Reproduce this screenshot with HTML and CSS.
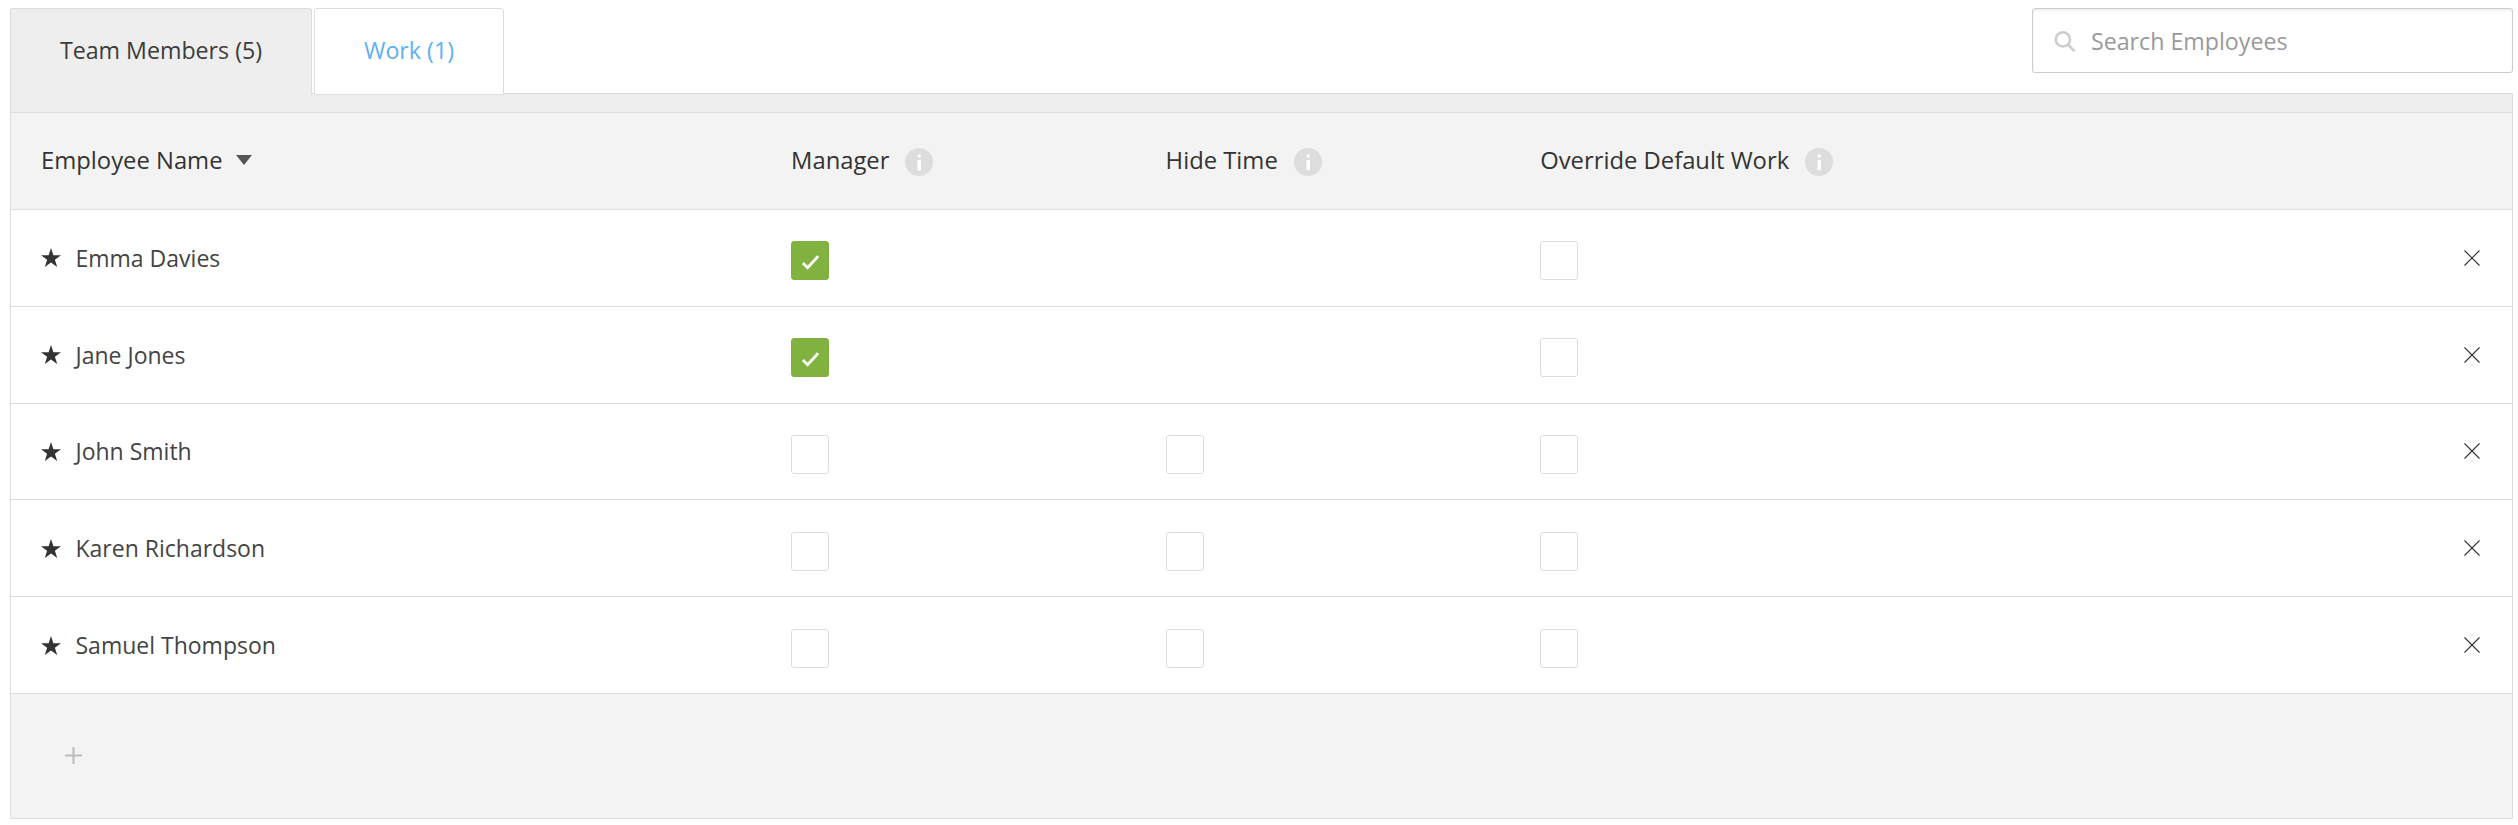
FILE: index.html
```html
<!DOCTYPE html>
<html lang="en">
<head>
<meta charset="utf-8">
<title>Team Members</title>
<link rel="stylesheet" href="styles.css">
</head>
<body>
<div class="top">
  <div class="tabs">
    <div class="tab tab-active">Team Members (5)</div>
    <div class="tab tab-link">Work (1)</div>
  </div>
  <div class="search">
    <svg class="search-icon" viewBox="0 0 21 20"><circle cx="8.5" cy="8" r="6.8"/><path d="M13.5 13l6 6.2"/></svg>
    <span>Search Employees</span>
  </div>
</div>
<div class="panel">
  <div class="band"></div>
  <div class="row head">
    <div class="cell"><span>Employee Name</span><span class="sort"></span></div>
    <div class="cell"><span>Manager</span><svg class="info" viewBox="0 0 27 27"><circle cx="13.5" cy="13.5" r="13.5"/><rect x="12" y="6" width="3.4" height="3.4" rx="1.7"/><rect x="12" y="11.5" width="3.4" height="10"/></svg></div>
    <div class="cell"><span>Hide Time</span><svg class="info" viewBox="0 0 27 27"><circle cx="13.5" cy="13.5" r="13.5"/><rect x="12" y="6" width="3.4" height="3.4" rx="1.7"/><rect x="12" y="11.5" width="3.4" height="10"/></svg></div>
    <div class="cell"><span>Override Default Work</span><svg class="info" viewBox="0 0 27 27"><circle cx="13.5" cy="13.5" r="13.5"/><rect x="12" y="6" width="3.4" height="3.4" rx="1.7"/><rect x="12" y="11.5" width="3.4" height="10"/></svg></div>
    <div class="cell"></div>
  </div>
  <div class="row body">
    <div class="cell"><svg class="star" viewBox="0 0 20 19"><path d="M10 0l2.4 7.2H20l-6.1 4.5 2.3 7.3L10 14.5 3.8 19l2.3-7.3L0 7.2h7.6z"/></svg><span>Emma Davies</span></div>
    <div class="cell box-cell"><span class="check on"><svg viewBox="0 0 20 16"><path d="M2 9l5 5L18 2"/></svg></span></div>
    <div class="cell box-cell"></div>
    <div class="cell box-cell"><span class="check"></span></div>
    <div class="cell close-cell"><svg class="close" viewBox="0 0 16 16"><path d="M.5.5l15 15M15.500.5l-15 15"/></svg></div>
  </div>
  <div class="row body">
    <div class="cell"><svg class="star" viewBox="0 0 20 19"><path d="M10 0l2.4 7.2H20l-6.1 4.5 2.3 7.3L10 14.5 3.8 19l2.3-7.3L0 7.2h7.6z"/></svg><span>Jane Jones</span></div>
    <div class="cell box-cell"><span class="check on"><svg viewBox="0 0 20 16"><path d="M2 9l5 5L18 2"/></svg></span></div>
    <div class="cell box-cell"></div>
    <div class="cell box-cell"><span class="check"></span></div>
    <div class="cell close-cell"><svg class="close" viewBox="0 0 16 16"><path d="M.5.5l15 15M15.500.5l-15 15"/></svg></div>
  </div>
  <div class="row body">
    <div class="cell"><svg class="star" viewBox="0 0 20 19"><path d="M10 0l2.4 7.2H20l-6.1 4.5 2.3 7.3L10 14.5 3.8 19l2.3-7.3L0 7.2h7.6z"/></svg><span>John Smith</span></div>
    <div class="cell box-cell"><span class="check"></span></div>
    <div class="cell box-cell"><span class="check"></span></div>
    <div class="cell box-cell"><span class="check"></span></div>
    <div class="cell close-cell"><svg class="close" viewBox="0 0 16 16"><path d="M.5.5l15 15M15.500.5l-15 15"/></svg></div>
  </div>
  <div class="row body">
    <div class="cell"><svg class="star" viewBox="0 0 20 19"><path d="M10 0l2.4 7.2H20l-6.1 4.5 2.3 7.3L10 14.5 3.8 19l2.3-7.3L0 7.2h7.6z"/></svg><span>Karen Richardson</span></div>
    <div class="cell box-cell"><span class="check"></span></div>
    <div class="cell box-cell"><span class="check"></span></div>
    <div class="cell box-cell"><span class="check"></span></div>
    <div class="cell close-cell"><svg class="close" viewBox="0 0 16 16"><path d="M.5.5l15 15M15.500.5l-15 15"/></svg></div>
  </div>
  <div class="row body">
    <div class="cell"><svg class="star" viewBox="0 0 20 19"><path d="M10 0l2.4 7.2H20l-6.1 4.5 2.3 7.3L10 14.5 3.8 19l2.3-7.3L0 7.2h7.6z"/></svg><span>Samuel Thompson</span></div>
    <div class="cell box-cell"><span class="check"></span></div>
    <div class="cell box-cell"><span class="check"></span></div>
    <div class="cell box-cell"><span class="check"></span></div>
    <div class="cell close-cell"><svg class="close" viewBox="0 0 16 16"><path d="M.5.5l15 15M15.500.5l-15 15"/></svg></div>
  </div>
  <div class="foot"><svg class="plus" viewBox="0 0 17 17"><path d="M8.500 0v17M0 8.500h17"/></svg></div>
</div>
</body>
</html>
```

FILE: styles.css
```css
* { box-sizing: border-box; }
html, body { margin: 0; padding: 0; background: #fff; }
body {
  padding: 8px 5px 0 10px;
  font-family: "Open Sans", "Noto Sans", sans-serif;
  font-size: 23px;
  color: #444;
  overflow: hidden;
}
.top { display: flex; justify-content: space-between; align-items: flex-start; height: 85px; }
.tabs { display: flex; gap: 2px; }
.tab {
  height: 87px;
  border: 1px solid #ddd;
  border-radius: 3px 3px 0 0;
  display: flex;
  align-items: center;
  justify-content: center;
  padding-bottom: 4px;
  font-size: 23.2px;
  position: relative;
  z-index: 1;
}
.tab-active { width: 302px; background: #eee; border-bottom: 0; color: #3c3c3c; }
.tab-link { width: 190px; background: #fff; color: #5eb0f2; }
.search {
  width: 481px;
  height: 65px;
  border: 1px solid #ccc;
  border-radius: 3px;
  box-shadow: inset 0 2px 2px #f0f0f0;
  display: flex;
  align-items: center;
  padding: 1px 0 0 21px;
  gap: 15px;
  color: #999;
  font-size: 23.2px;
}
.search-icon { width: 22px; height: 21px; fill: none; stroke: #ccc; stroke-width: 2.4; }
.panel { border: 1px solid #ddd; }
.band { height: 19px; background: #eee; border-bottom: 1px solid #ddd; }
.row {
  display: grid;
  grid-template-columns: 750px 374.6px 374.6px 1fr 90px;
  border-bottom: 1px solid #ddd;
  align-items: center;
}
.row.head { height: 97px; background: #f3f3f3; padding-bottom: 2px; font-size: 23.8px; color: #333; }
.row.body { height: 96.8px; background: #fff; }
.cell { display: flex; align-items: center; padding-left: 30px; }
.head .cell { gap: 16px; }
.body .cell { gap: 14.500px; }
.box-cell { padding-top: 6px; }
.head .sort {
  width: 0; height: 0;
  margin-left: -3px;
  border-left: 8px solid transparent;
  border-right: 8px solid transparent;
  border-top: 10px solid #555;
}
.info { width: 28px; height: 28px; margin-top: 4px; flex: none; }
.info circle { fill: #ddd; }
.info rect { fill: #fff; }
.star { width: 20px; height: 19px; fill: #333; flex: none; }
.check {
  width: 38px; height: 39px;
  border: 1px solid #ddd;
  border-radius: 3px;
  background: #fff;
  display: flex;
  align-items: center;
  justify-content: center;
}
.check.on { background: #81b13e; border-color: #81b13e; }
.check svg { width: 19px; height: 16px; fill: none; stroke: #fff; stroke-width: 3; margin-top: 3px; }
.close-cell { justify-content: flex-end; padding: 0 32px 0 0; }
.close { width: 16px; height: 16px; fill: none; stroke: #333; stroke-width: 1.1; }
.foot { height: 124px; background: #f3f3f3; display: flex; align-items: center; padding-left: 54px; }
.plus { width: 17px; height: 17px; fill: none; stroke: #bbb; stroke-width: 2; }
```
